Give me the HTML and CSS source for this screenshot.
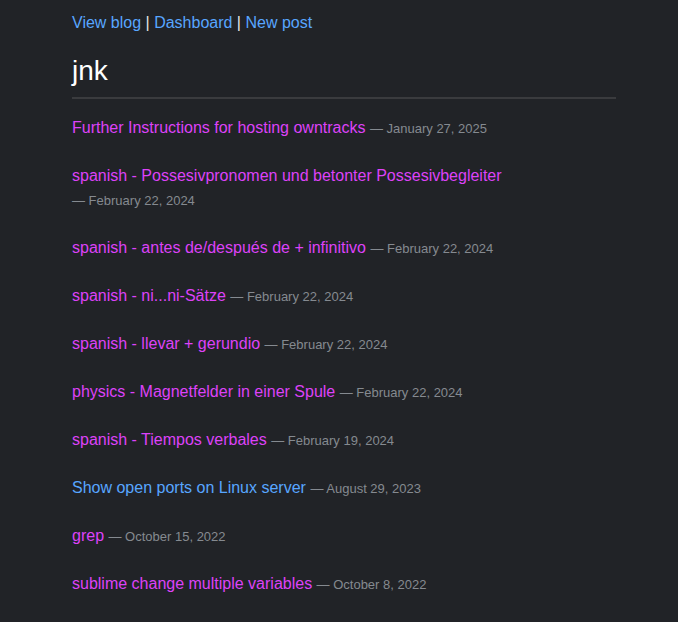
FILE: index.html
```html
<!DOCTYPE html>
<html>
<head>
<meta charset="utf-8">
<link rel="stylesheet" href="styles.css">
</head>
<body>
<div class="page">
  <nav class="nav"><a class="link" href="#">View blog</a> | <a class="link" href="#">Dashboard</a> | <a class="link" href="#">New post</a></nav>
  <h1 class="title">jnk</h1>
  <ul class="posts">
    <li class="post"><a class="link visited" href="#">Further Instructions for hosting owntracks</a> <span class="date">— January 27, 2025</span></li>
    <li class="post"><a class="link visited" href="#">spanish - Possesivpronomen und betonter Possesivbegleiter</a> <span class="date">— February 22, 2024</span></li>
    <li class="post"><a class="link visited" href="#">spanish - antes de/después de + infinitivo</a> <span class="date">— February 22, 2024</span></li>
    <li class="post"><a class="link visited" href="#">spanish - ni...ni-Sätze</a> <span class="date">— February 22, 2024</span></li>
    <li class="post"><a class="link visited" href="#">spanish - llevar + gerundio</a> <span class="date">— February 22, 2024</span></li>
    <li class="post"><a class="link visited" href="#">physics - Magnetfelder in einer Spule</a> <span class="date">— February 22, 2024</span></li>
    <li class="post"><a class="link visited" href="#">spanish - Tiempos verbales</a> <span class="date">— February 19, 2024</span></li>
    <li class="post"><a class="link" href="#">Show open ports on Linux server</a> <span class="date">— August 29, 2023</span></li>
    <li class="post"><a class="link visited" href="#">grep</a> <span class="date">— October 15, 2022</span></li>
    <li class="post"><a class="link visited" href="#">sublime change multiple variables</a> <span class="date">— October 8, 2022</span></li>
  </ul>
</div>
</body>
</html>
```
FILE: styles.css
```css
html, body {
  margin: 0;
  padding: 0;
  background: #212327;
  color: #e6e6e6;
  font-family: "Liberation Sans", Arial, sans-serif;
  font-size: 16px;
}
.page {
  width: 544px;
  padding: 13px 0 0 72px;
}
.nav {
  line-height: 20px;
  color: #e6e6e6;
}
.link {
  color: #58a6ff;
  text-decoration: none;
}
.link.visited {
  color: #dd42f8;
}
.title {
  margin: 20px 0 0;
  font-weight: normal;
  font-size: 28px;
  line-height: 36px;
  color: #ffffff;
  padding-bottom: 8px;
  border-bottom: 2px solid #3a3b3e;
}
.posts {
  list-style: none;
  margin: 17px 0 0;
  padding: 0;
}
.post {
  line-height: 24px;
  margin-bottom: 24px;
}
.date {
  font-size: 13px;
  line-height: 1;
  white-space: nowrap;
  color: #858a90;
}
```
